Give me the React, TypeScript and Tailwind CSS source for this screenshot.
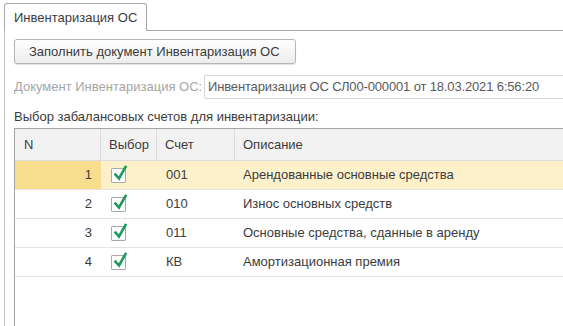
import React from "react";

const rows = [
  { n: 1, code: "001", desc: "Арендованные основные средства", active: true },
  { n: 2, code: "010", desc: "Износ основных средств" },
  { n: 3, code: "011", desc: "Основные средства, сданные в аренду" },
  { n: 4, code: "КВ", desc: "Амортизационная премия" },
];

function Check() {
  return (
    <div className="relative w-[15px] h-[15px] border border-[#a9a9a9] bg-white rounded-[1px]">
      <svg
        className="absolute left-[1px] top-[-5px]"
        width="15"
        height="18"
        viewBox="0 0 15 18"
      >
        <path
          d="M2.5 10.5 L6 14.5 L12.5 3"
          fill="none"
          stroke="#1c9a5c"
          strokeWidth="2.6"
          strokeLinecap="square"
        />
      </svg>
    </div>
  );
}

export default function App() {
  return (
    <div className="w-[563px] h-[326px] bg-white overflow-hidden flex flex-col text-[13px] text-[#3c3c3c] font-['Liberation_Sans',Arial,sans-serif]">
      {/* Tabs */}
      <div className="flex pt-[3px] pl-[4px] shrink-0">
        <div className="h-[28px] px-[9px] flex items-center border border-b-0 border-[#a8a8a8] rounded-t-[3px] bg-white">
          Инвентаризация ОС
        </div>
        <div className="flex-1 border-b border-[#a8a8a8]" />
      </div>

      {/* Content */}
      <div className="flex-1 flex flex-col ml-[4px] border-l border-[#c4c4c4] pl-[9px] min-h-0">
        <div className="pt-[8px]">
          <button className="h-[25px] w-[282px] px-[14px] text-left border border-[#b5b5b5] rounded-[3px] bg-gradient-to-b from-white to-[#ededed] shadow-[0_1px_1px_rgba(0,0,0,0.12)] text-[#3c3c3c]">
            Заполнить документ Инвентаризация ОС
          </button>
        </div>

        <div className="flex items-center mt-[11px] h-[24px]">
          <div className="w-[190px] text-[#a6a6a6]">Документ Инвентаризация ОС:</div>
          <div className="flex-1 h-[24px] flex items-center pl-[3px] border border-r-0 border-[#d6d6d6] rounded-l-[2px] text-[#5a5a5a] whitespace-nowrap tracking-[-0.15px]">
            Инвентаризация ОС СЛ00-000001 от 18.03.2021 6:56:20
          </div>
        </div>

        <div className="mt-[10px] h-[16px] leading-[16px]">
          Выбор забалансовых счетов для инвентаризации:
        </div>

        {/* Table */}
        <div className="mt-[3px] flex-1 border-l border-t border-[#a3a3a3] flex flex-col">
          <div className="flex h-[32px] bg-[#f2f2f2] border-b border-[#dcdcdc] shrink-0">
            <div className="w-[86px] pl-[9px] flex items-center border-r border-[#dcdcdc]">N</div>
            <div className="w-[56px] pl-[8px] flex items-center border-r border-[#dcdcdc]">Выбор</div>
            <div className="w-[78px] pl-[8px] flex items-center border-r border-[#dcdcdc]">Счет</div>
            <div className="flex-1 pl-[8px] flex items-center">Описание</div>
          </div>
          {rows.map((r) => (
            <div
              key={r.n}
              className={
                "flex h-[29px] border-b border-[#e3e3e3] shrink-0 " +
                (r.active ? "bg-[#fdf1cb]" : "bg-white")
              }
            >
              <div
                className={
                  "w-[86px] pr-[9px] flex items-center justify-end " +
                  (r.active ? "bg-[#f9dd8f]" : "")
                }
              >
                {r.n}
              </div>
              <div className="w-[56px] pl-[10px] flex items-center">
                <Check />
              </div>
              <div className="w-[78px] pl-[9px] flex items-center">{r.code}</div>
              <div className="flex-1 pl-[8px] flex items-center whitespace-nowrap">{r.desc}</div>
            </div>
          ))}
        </div>
      </div>
    </div>
  );
}
